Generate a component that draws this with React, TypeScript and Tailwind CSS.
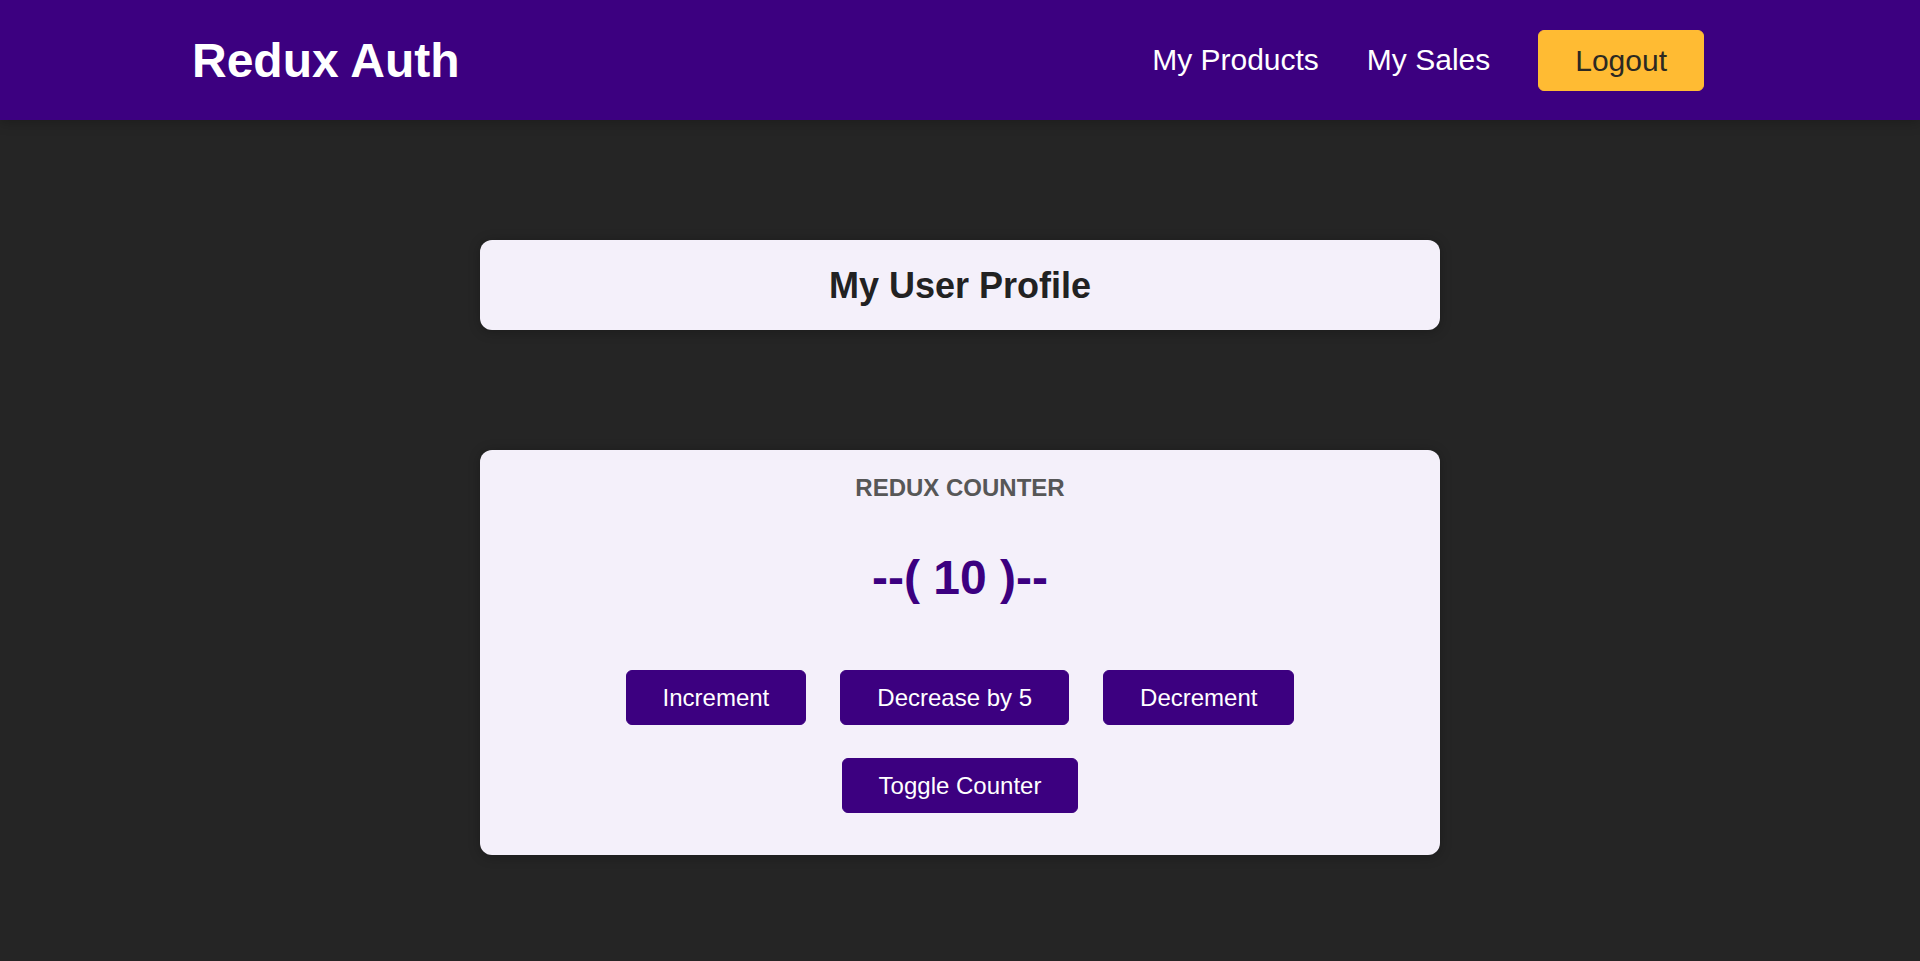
import React from "react";

const btn =
  "bg-[#3c0080] border border-[#3c0080] text-white text-[24px] leading-[27px] px-[36px] py-[13px] rounded-[6px] cursor-pointer";

export default function App() {
  return (
    <div className="min-h-screen bg-[#252525] font-['Liberation_Sans',Arial,sans-serif]">
      <header className="h-[120px] w-full flex justify-between items-center px-[192px] bg-[#3c0080] shadow-[0_1.5px_12px_rgba(0,0,0,0.25)]">
        <h1 className="text-[48px] font-bold text-white leading-[55px] m-0">Redux Auth</h1>
        <nav>
          <ul className="flex items-center list-none m-0 p-0">
            <li className="mx-[24px]">
              <a href="#" className="text-white text-[30px] leading-[34.5px] no-underline">My Products</a>
            </li>
            <li className="mx-[24px]">
              <a href="#" className="text-white text-[30px] leading-[34.5px] no-underline">My Sales</a>
            </li>
            <li className="mx-[24px]">
              <button className="block bg-[#ffbb33] border border-[#ffbb33] px-[36px] py-[12px] text-[30px] leading-[35px] text-[#2c2922] rounded-[6px] cursor-pointer">
                Logout
              </button>
            </li>
          </ul>
        </nav>
      </header>
      <main className="flex flex-col items-center pt-[120px] pb-[100px]">
        <section className="w-[960px] h-[90px] rounded-[12px] bg-[#f4f0fa] flex items-center justify-center shadow-[0_1.5px_12px_rgba(0,0,0,0.25)]">
          <h2 className="text-[36px] font-bold text-[#222] leading-[41px]">My User Profile</h2>
        </section>
        <section className="mt-[120px] w-[960px] rounded-[12px] bg-[#f4f0fa] pt-[24px] pb-[42px] text-center shadow-[0_1.5px_12px_rgba(0,0,0,0.25)]">
          <h1 className="uppercase text-[#575757] text-[24px] font-bold leading-[27.6px]">Redux Counter</h1>
          <div className="mt-[48px] text-[48px] font-bold text-[#3c0080] leading-[55.2px]">--( 10 )--</div>
          <div className="mt-[65px] flex justify-center gap-[34px]">
            <button className={btn}>Increment</button>
            <button className={btn}>Decrease by 5</button>
            <button className={btn}>Decrement</button>
          </div>
          <div className="mt-[33px] flex justify-center">
            <button className={btn}>Toggle Counter</button>
          </div>
        </section>
      </main>
    </div>
  );
}
